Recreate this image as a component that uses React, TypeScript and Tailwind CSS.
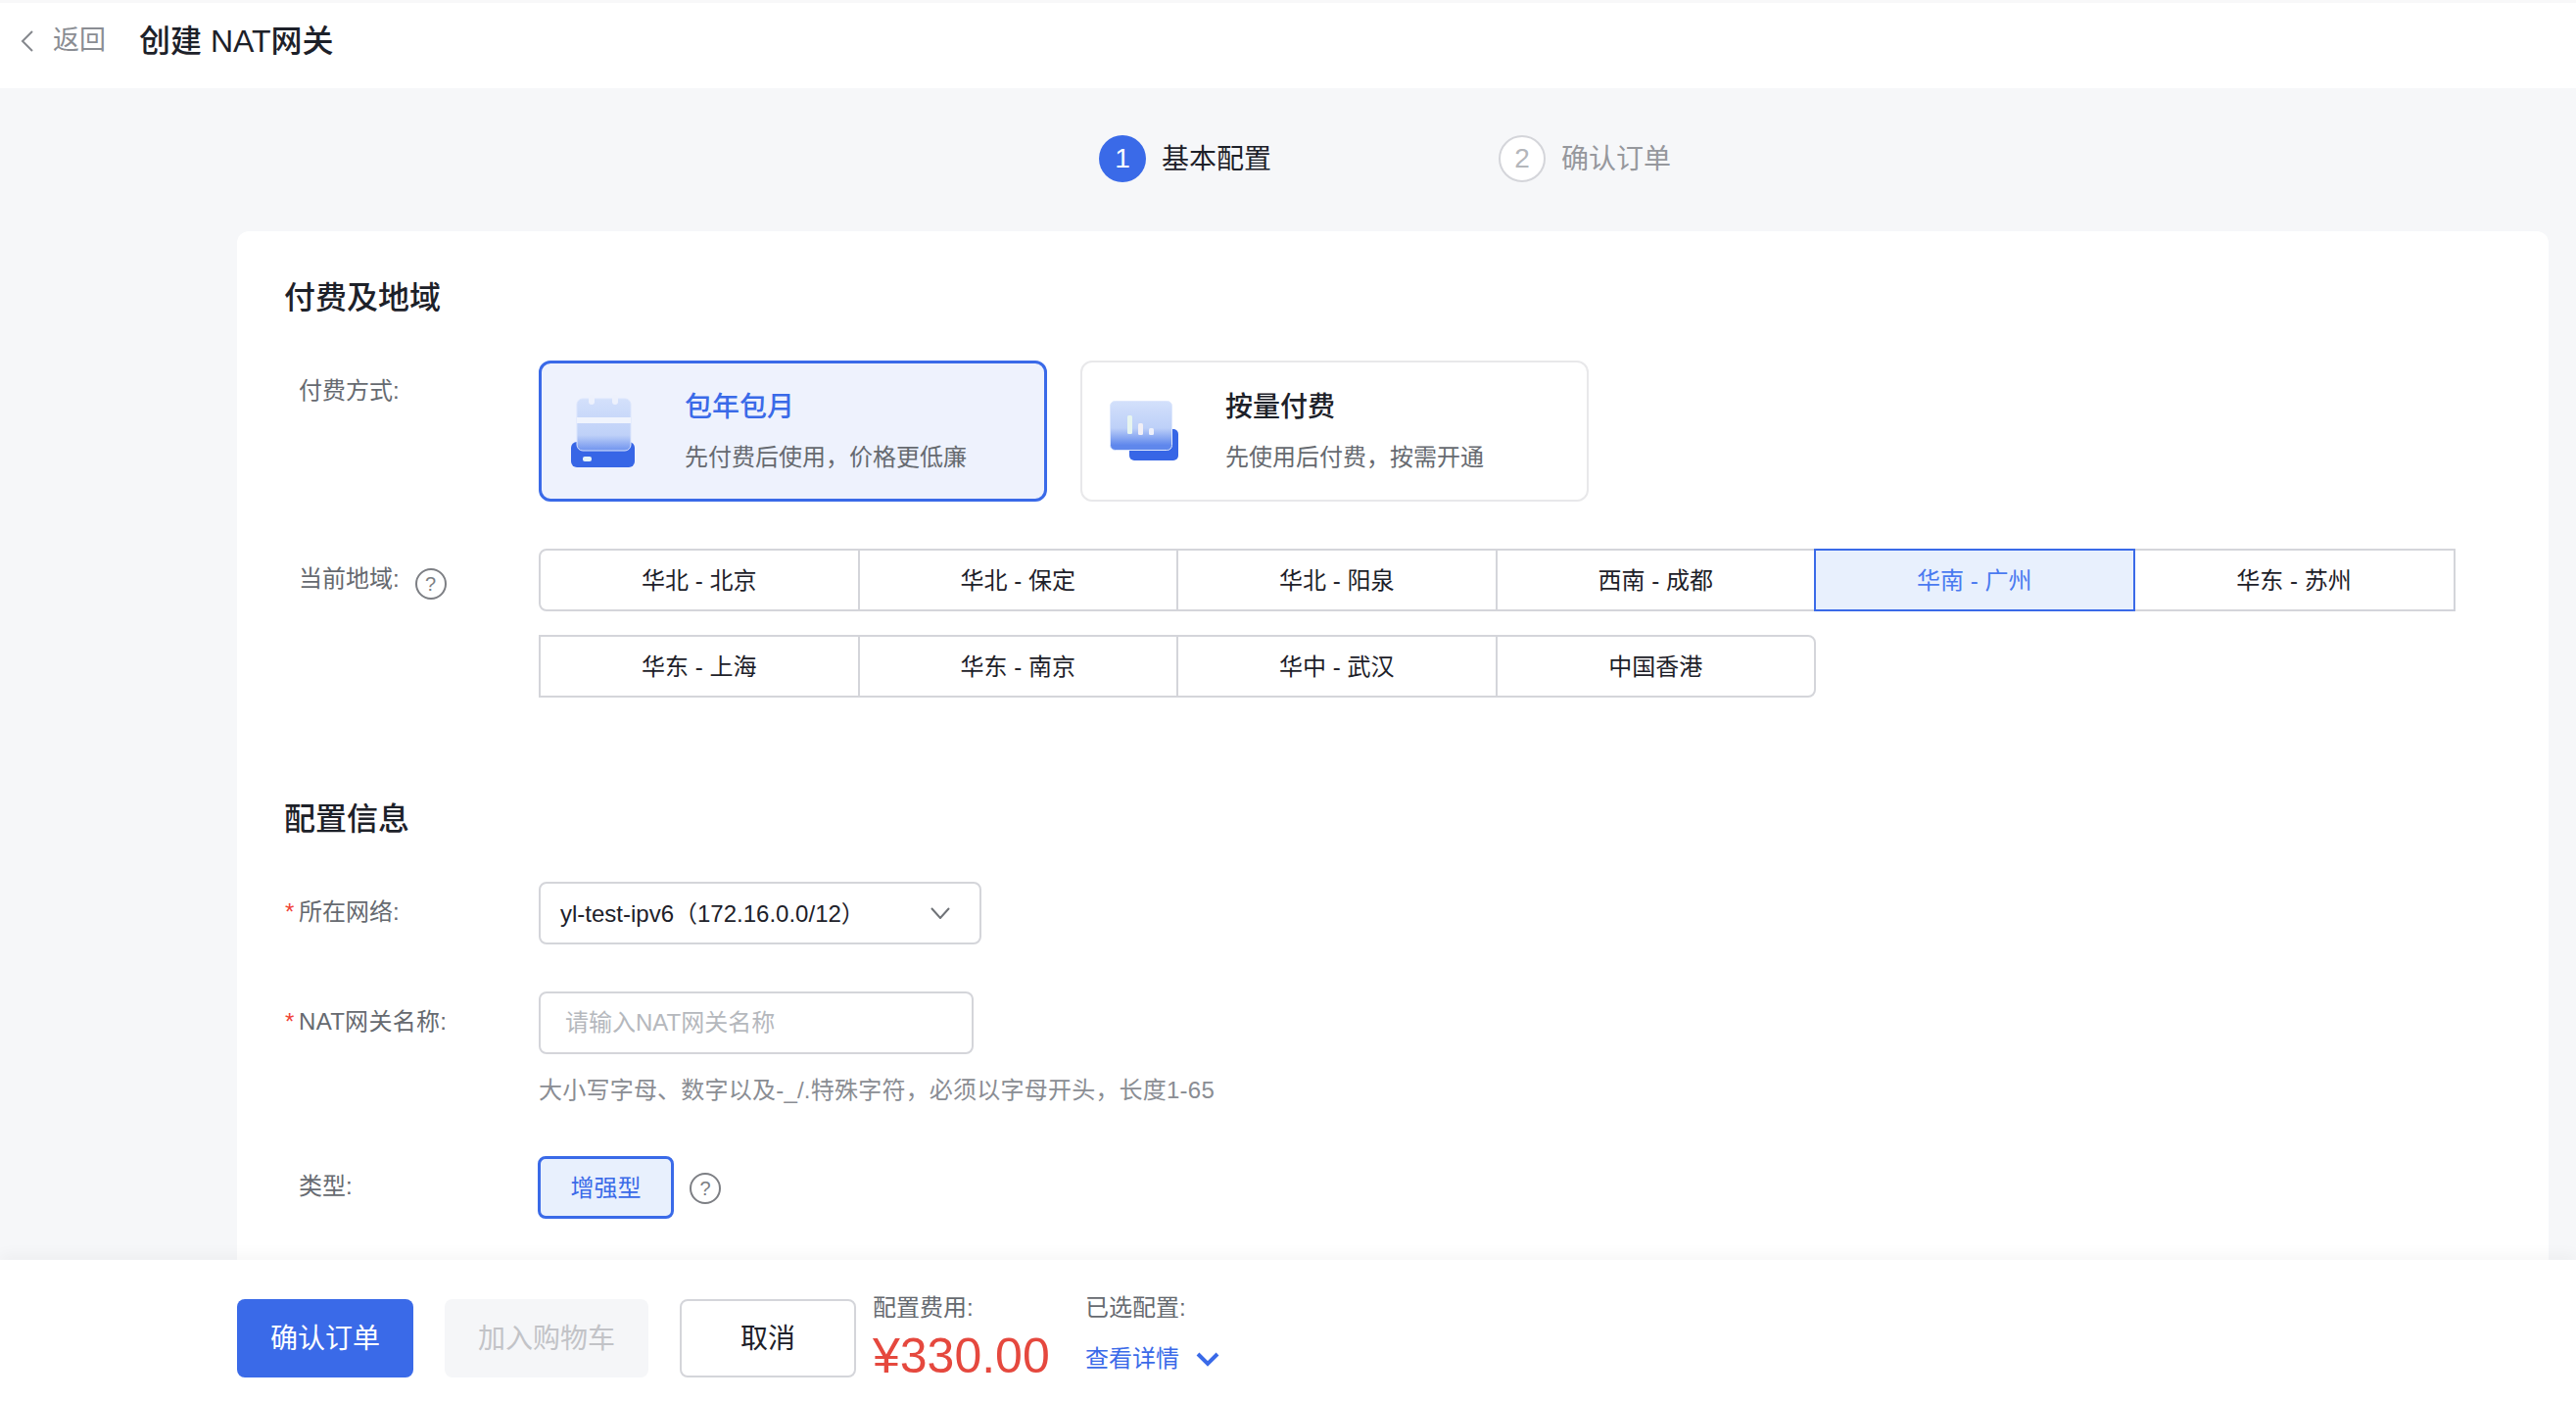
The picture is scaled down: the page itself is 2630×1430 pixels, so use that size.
const FONT = "font-['Liberation_Sans','Noto_Sans_CJK_SC',sans-serif]";

const ROW_ONE = ["华北 - 北京", "华北 - 保定", "华北 - 阳泉", "西南 - 成都", "华南 - 广州", "华东 - 苏州"];
const ROW_TWO = ["华东 - 上海", "华东 - 南京", "华中 - 武汉", "中国香港"];
const SELECTED = "华南 - 广州";

function CalendarIcon() {
  return (
    <svg width="66" height="74" viewBox="0 0 66 74" className="shrink-0">
      <defs>
        <linearGradient id="paper" x1="0" y1="0" x2="0" y2="1">
          <stop offset="0" stopColor="#d3e0fb" />
          <stop offset="0.7" stopColor="#bfd1f8" />
          <stop offset="1" stopColor="#6f93ee" />
        </linearGradient>
      </defs>
      <rect x="0" y="48" width="65" height="26" rx="6" fill="#3766e6" />
      <rect x="6" y="4" width="55" height="53" rx="6" fill="url(#paper)" stroke="#dbe5fc" strokeWidth="1" />
      <rect x="6" y="23" width="55" height="6" fill="#f0f4fd" />
      <rect x="18" y="0" width="6" height="10" rx="3" fill="#edf1fc" />
      <rect x="42" y="0" width="6" height="10" rx="3" fill="#edf1fc" />
      <rect x="12" y="63" width="9" height="5" rx="2" fill="#e6f4f8" />
    </svg>
  );
}

function UsageIcon() {
  return (
    <svg width="71" height="62" viewBox="0 0 71 62" className="shrink-0">
      <defs>
        <linearGradient id="glass" x1="0" y1="0" x2="0" y2="1">
          <stop offset="0" stopColor="#d3e0fb" />
          <stop offset="0.55" stopColor="#bdd0f8" />
          <stop offset="0.9" stopColor="#5f87ec" />
        </linearGradient>
      </defs>
      <rect x="20" y="29" width="50" height="32" rx="5" fill="#3766e6" />
      <rect x="0.5" y="0.5" width="63" height="50" rx="5" fill="url(#glass)" stroke="#dde7fc" strokeWidth="1" />
      <rect x="18" y="15" width="5" height="19" rx="1.5" fill="#e7f5ef" />
      <rect x="29" y="23" width="5" height="12" rx="1.5" fill="#f1eff6" />
      <rect x="40" y="28" width="5" height="7" rx="1.5" fill="#eef0fa" />
    </svg>
  );
}

function Help() {
  return (
    <span className="flex h-[32px] w-[32px] shrink-0 items-center justify-center rounded-full border-2 border-[#7d7f84] text-[20px] leading-none text-[#7d7f84]">
      ?
    </span>
  );
}

function Label({ text, required, wide }: { text: string; required?: boolean; wide?: boolean }) {
  return (
    <div className={`mt-[13px] flex w-[260px] shrink-0 text-[24px] leading-[36px] text-[#666a70] ${wide ? "tracking-[0.3px]" : ""}`}>
      <span className="w-[15px] pl-[1px] text-[#f04438]">{required ? "*" : ""}</span>
      <span>{text}</span>
    </div>
  );
}

function RegionCell({ name, first, className }: { name: string; first: boolean; className?: string }) {
  const active = name === SELECTED;
  return (
    <div
      className={`flex h-[64px] w-[327.5px] items-center justify-center border-2 pt-[2px] text-[24px] ${first ? "" : "-ml-[2px]"} ${
        active ? "relative z-10 border-[#3a6ae8] bg-[#e8f0fd] text-[#4a7af0]" : "border-[#d4d5da] bg-white text-[#1d2129]"
      } ${className ?? ""}`}
    >
      {name}
    </div>
  );
}

export default function App() {
  return (
    <div className={`flex h-screen flex-col overflow-hidden bg-[#f6f7f9] ${FONT}`}>
      <header className="flex h-[90px] shrink-0 items-center border-t-[3px] border-[#f8f8f9] bg-white pb-[10px]">
        <svg width="14" height="22" viewBox="0 0 14 22" className="ml-[21px]" fill="none">
          <polyline points="12,1 2,11 12,21" stroke="#85888d" strokeWidth="2" />
        </svg>
        <span className="ml-[19px] text-[27px] text-[#8a8d93]">返回</span>
        <span className="ml-[34px] text-[32px] font-medium text-[#1d2129]">创建 NAT网关</span>
      </header>

      <main className="min-h-0 flex-1 overflow-hidden">
        <div className="flex h-[146px] items-start pl-[1122px] pt-[48px]">
          <div className="flex w-[408px] items-center gap-[16px]">
            <span className="flex h-[48px] w-[48px] items-center justify-center rounded-full bg-[#3a6ae8] text-[28px] text-white">1</span>
            <span className="pt-[2px] text-[28px] text-[#1d2129]">基本配置</span>
          </div>
          <div className="flex items-center gap-[16px]">
            <span className="flex h-[48px] w-[48px] items-center justify-center rounded-full border-2 border-[#d4d5da] bg-white text-[28px] text-[#b4b6bb]">2</span>
            <span className="pt-[2px] text-[28px] text-[#96989d]">确认订单</span>
          </div>
        </div>

        <div className="ml-[242px] mr-[28px] rounded-t-[12px] bg-white pl-[48px] pt-[46px]">
          <h2 className="text-[32px] font-medium leading-[44px] text-[#1d2129]">付费及地域</h2>

          <div className="mt-[42px] flex">
            <Label text="付费方式:" />
            <div className="flex gap-[34px]">
              <div className="flex h-[144px] w-[519px] items-center rounded-[12px] border-[3px] border-[#3a6ae8] bg-[#eef2fd] pl-[30px]">
                <CalendarIcon />
                <div className="ml-[50px]">
                  <div className="pt-[1px] text-[28px] font-medium leading-[40px] text-[#3a6ae8]">包年包月</div>
                  <div className="mt-[13px] text-[24px] leading-[36px] text-[#666a70]">先付费后使用，价格更低廉</div>
                </div>
              </div>
              <div className="flex h-[144px] w-[519px] items-center rounded-[12px] border-2 border-[#e8e8ea] bg-white pl-[28px]">
                <UsageIcon />
                <div className="ml-[47px]">
                  <div className="pt-[1px] text-[28px] font-medium leading-[40px] text-[#1d2129]">按量付费</div>
                  <div className="mt-[13px] text-[24px] leading-[36px] text-[#666a70]">先使用后付费，按需开通</div>
                </div>
              </div>
            </div>
          </div>

          <div className="mt-[48px] flex">
            <div className="flex w-[260px] shrink-0">
              <div className="mt-[13px] flex text-[24px] leading-[36px] text-[#666a70]">
                <span className="w-[15px]" />
                <span>当前地域:</span>
              </div>
              <div className="ml-[16px] mt-[20px]">
                <Help />
              </div>
            </div>
            <div className="flex flex-col gap-[24px]">
              <div className="flex">
                {ROW_ONE.map((name, i) => (
                  <RegionCell key={name} name={name} first={i === 0} className={i === 0 ? "rounded-l-[8px]" : i === 5 ? "w-[329px]" : ""} />
                ))}
              </div>
              <div className="flex">
                {ROW_TWO.map((name, i) => (
                  <RegionCell key={name} name={name} first={i === 0} className={i === 3 ? "rounded-r-[8px]" : ""} />
                ))}
              </div>
            </div>
          </div>

          <h2 className="mt-[102px] text-[32px] font-medium leading-[44px] text-[#1d2129]">配置信息</h2>

          <div className="mt-[42px] flex">
            <Label text="所在网络:" required />
            <div className="flex h-[64px] w-[452px] items-center justify-between rounded-[8px] border-2 border-[#d4d5da] pl-[20px] pr-[30px] text-[24px] text-[#1d2129]">
              <span className="pt-[1px]">yl-test-ipv6（172.16.0.0/12）</span>
              <svg width="20" height="12" viewBox="0 0 20 12" fill="none">
                <polyline points="1,1 10,11 19,1" stroke="#6f7277" strokeWidth="2" />
              </svg>
            </div>
          </div>

          <div className="mt-[48px] flex">
            <Label text="NAT网关名称:" required wide />
            <div>
              <input
                placeholder="请输入NAT网关名称"
                className="block h-[64px] w-[444px] rounded-[8px] border-2 border-[#d4d5da] pl-[25px] text-[24px] outline-none placeholder:text-[#b5b8bd]"
              />
              <p className="mt-[19px] text-[24px] leading-[36px] tracking-[0.22px] text-[#8a8d93]">大小写字母、数字以及-_/.特殊字符，必须以字母开头，长度1-65</p>
            </div>
          </div>

          <div className="mt-[49px] flex pb-[60px]">
            <Label text="类型:" />
            <div className="-ml-[1px] flex h-[64px] w-[139px] items-center justify-center rounded-[8px] border-[3px] border-[#3a6ae8] bg-[#e8f0fd] pt-[1px] text-[24px] text-[#3a6ae8]">
              增强型
            </div>
            <div className="ml-[16px] mt-[17px]">
              <Help />
            </div>
          </div>
        </div>
      </main>

      <footer className="relative z-20 flex h-[144px] shrink-0 items-start bg-white pl-[242px] pt-[40px] shadow-[0_-6px_14px_rgba(0,0,0,0.035)]">
        <button className="h-[80px] w-[180px] rounded-[8px] bg-[#3a6ae8] pt-[2px] text-[28px] text-white">确认订单</button>
        <button className="ml-[32px] h-[80px] w-[208px] rounded-[8px] bg-[#f5f6f8] pt-[2px] text-[28px] text-[#c2c3c7]">加入购物车</button>
        <button className="ml-[32px] h-[80px] w-[180px] rounded-[8px] border-2 border-[#d4d5da] bg-white pt-[2px] text-[28px] text-[#1d2129]">取消</button>
        <div className="ml-[17px] -mt-[9px] w-[217px]">
          <div className="text-[24px] leading-[36px] text-[#666a70]">配置费用:</div>
          <div className="mt-[2px] text-[50px] leading-[58px] text-[#e5483e]">¥330.00</div>
        </div>
        <div className="-mt-[9px]">
          <div className="text-[24px] leading-[36px] text-[#666a70]">已选配置:</div>
          <div className="mt-[16px] flex items-center gap-[17px] text-[24px] leading-[36px] text-[#3a6ae8]">
            <span>查看详情</span>
            <svg width="24" height="15" viewBox="0 0 24 15" fill="none">
              <polyline points="2,2 12,12 22,2" stroke="#3a6ae8" strokeWidth="4" />
            </svg>
          </div>
        </div>
      </footer>
    </div>
  );
}
